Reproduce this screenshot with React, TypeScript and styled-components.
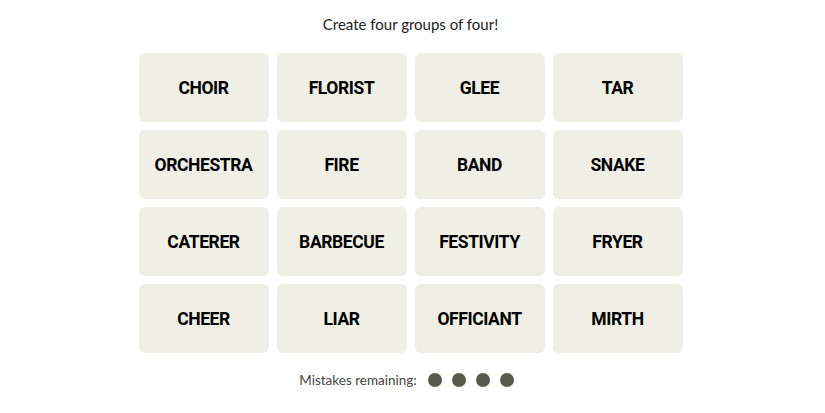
import React from "react";
import styled, { createGlobalStyle } from "styled-components";

const WORDS = [
  "CHOIR", "FLORIST", "GLEE", "TAR",
  "ORCHESTRA", "FIRE", "BAND", "SNAKE",
  "CATERER", "BARBECUE", "FESTIVITY", "FRYER",
  "CHEER", "LIAR", "OFFICIANT", "MIRTH",
];

const MISTAKES_LEFT = 4;

const App = () => {
  return (
    <>
      <GlobalStyle />
      <Page>
        <Prompt>Create four groups of four!</Prompt>
        <Board>
          {WORDS.map(word => (
            <Tile key={word}>{word}</Tile>
          ))}
        </Board>
        <Mistakes>
          <MistakesLabel>Mistakes remaining:</MistakesLabel>
          <Dots>
            {Array.from({ length: MISTAKES_LEFT }).map((_, i) => (
              <Dot key={i} />
            ))}
          </Dots>
        </Mistakes>
      </Page>
    </>
  );
};

const GlobalStyle = createGlobalStyle`
  body {
    margin: 0;
    background: #fff;
    font-family: "Roboto", "Liberation Sans", sans-serif;
  }
`;

const Page = styled.div`
  display: flex;
  flex-direction: column;
  align-items: center;
  padding-top: 14px;
`;

const Prompt = styled.div`
  font-family: "Lato", "Liberation Sans", sans-serif;
  font-size: 15px;
  line-height: 20px;
  color: #222;
  margin-bottom: 19px;
  margin-right: 4px;
`;

const Board = styled.div`
  display: grid;
  grid-template-columns: repeat(4, 130px);
  grid-auto-rows: 69px;
  gap: 8px;
  margin-right: 4px;
`;

const Tile = styled.div`
  display: flex;
  align-items: center;
  justify-content: center;
  background: #efefe6;
  border-radius: 6px;
  font-family: "Roboto", "Liberation Sans", sans-serif;
  font-weight: 700;
  font-size: 17.5px;
  letter-spacing: -0.4px;
  color: #000;
`;

const Mistakes = styled.div`
  display: flex;
  align-items: center;
  margin-top: 19px;
  gap: 11px;
  margin-right: 12px;
`;

const MistakesLabel = styled.span`
  font-family: "Lato", "Liberation Sans", sans-serif;
  font-size: 13.5px;
  color: #444;
`;

const Dots = styled.div`
  display: flex;
  gap: 10px;
`;

const Dot = styled.span`
  width: 14px;
  height: 14px;
  border-radius: 50%;
  background: #5a594e;
`;

export default App;
